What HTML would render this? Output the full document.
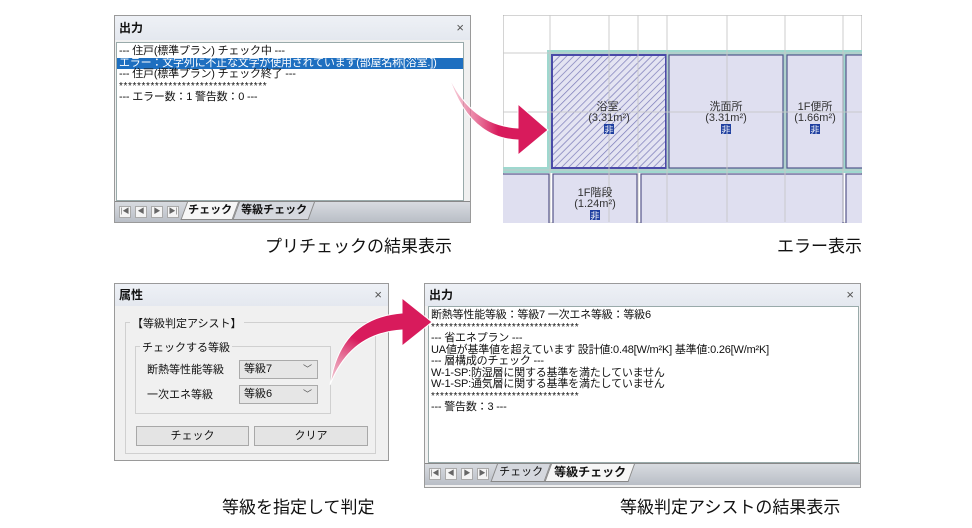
<!DOCTYPE html>
<html><head><meta charset="utf-8">
<style>
*{margin:0;padding:0;box-sizing:border-box}
body{width:972px;height:528px;background:#fff;position:relative;overflow:hidden;font-family:"Liberation Sans","Noto Sans CJK JP",sans-serif;color:#111}
.abs{position:absolute}
.panel{position:absolute;background:#f0f0f0;border:1px solid #9a9a9a}
.title{position:absolute;left:0;right:0;top:0;height:24px;background:linear-gradient(#eef1f6,#e4e8ef);font-weight:bold;font-size:12px;line-height:24px;padding-left:4px}
.x{position:absolute;right:6px;top:0;font-size:13px;color:#555;font-weight:normal}
.txt{position:absolute;background:#fff;border:1px solid #9aa;font-size:11px;line-height:11.5px;white-space:nowrap;overflow:hidden;padding:3px 0 0 2px;letter-spacing:-0.2px}
.st{letter-spacing:0.6px;font-size:10px}
.tabs{position:absolute;left:0;right:0;background:linear-gradient(#d8dbe0,#b9bec6);border-top:1px solid #888}
.nb{position:absolute;top:4px;width:12px;height:12px;background:#f4f4f4;border:1px solid #aaa;font-size:7px;line-height:10px;text-align:center;color:#666}
.tab{position:absolute;top:0;height:18px;font-size:11px;font-weight:bold;line-height:16px;border:1px solid #888;border-top:none;transform:skewX(-20deg);transform-origin:0 0;text-align:center}
.tab span{display:inline-block;transform:skewX(20deg)}
.lbl{position:absolute;font-size:17px;white-space:nowrap}
.sel{position:absolute;background:#e6e6e6;border:1px solid #aaa;font-size:11px;line-height:17px;padding-left:4px}
.sel i{position:absolute;right:5px;top:0;font-style:normal;color:#555;font-size:9px}
.btn{position:absolute;background:#e4e4e4;border:1px solid #a8a8a8;font-size:11px;text-align:center;line-height:19px}
.grp{position:absolute;border:1px solid #d0d0d0}
.gl{position:absolute;background:#f0f0f0;font-size:11px;padding:0 2px;top:-8px}
</style></head><body>

<!-- Panel 1 -->
<div class="panel" style="left:114px;top:15px;width:357px;height:208px">
 <div class="title">出力<span class="x">×</span></div>
 <div class="txt" style="left:1px;top:26px;width:348px;height:159px">
  <div>--- 住戸(標準プラン) チェック中 ---</div>
  <div style="background:#1e6fc0;color:#fff;margin-left:-2px;padding-left:2px">エラー：文字列に不正な文字が使用されています(部屋名称[浴室.])</div>
  <div>--- 住戸(標準プラン) チェック終了 ---</div>
  <div class="st">*********************************</div>
  <div>--- エラー数：1 警告数：0 ---</div>
 </div>
 <div class="tabs" style="top:185px;height:21px">
  <div class="nb" style="left:4px">|◀</div><div class="nb" style="left:20px">◀</div><div class="nb" style="left:36px">▶</div><div class="nb" style="left:52px">▶|</div>
  <div class="tab" style="left:72px;width:52px;background:#f6f6f6;z-index:2"><span>チェック</span></div>
  <div class="tab" style="left:124px;width:76px;background:#d5d8de"><span>等級チェック</span></div>
 </div>
</div>

<!-- Panel 2 floor plan -->
<svg class="abs" style="left:503px;top:15px" width="359" height="208" viewBox="503 15 359 208">
 <defs><pattern id="h" width="5" height="5" patternUnits="userSpaceOnUse" patternTransform="rotate(45)"><rect width="5" height="5" fill="#e4e4f2"/><line x1="0" y1="0" x2="0" y2="5" stroke="#7a7ab8" stroke-width="1.4"/></pattern></defs>
 <rect x="503" y="15" width="359" height="208" fill="#fff" stroke="#aaa"/>
 <rect x="547" y="50" width="315" height="122" fill="#9fd8cf"/>
 <rect x="503" y="167" width="359" height="6" fill="#9fd8cf"/>
 <rect x="552" y="55" width="114" height="113" fill="url(#h)" stroke="#4a4aa8" stroke-width="2"/>
 <rect x="669" y="55" width="114" height="113" fill="#dfdff0" stroke="#55558a" stroke-width="1.2"/>
 <rect x="787" y="55" width="56" height="113" fill="#dfdff0" stroke="#55558a" stroke-width="1.2"/>
 <rect x="846" y="55" width="20" height="113" fill="#dfdff0" stroke="#55558a" stroke-width="1.2"/>
 <rect x="500" y="174" width="49" height="52" fill="#dfdff0" stroke="#55558a" stroke-width="1.2"/>
 <rect x="553" y="174" width="84" height="52" fill="#dfdff0" stroke="#55558a" stroke-width="1.2"/>
 <rect x="641" y="174" width="202" height="52" fill="#dfdff0" stroke="#55558a" stroke-width="1.2"/>
 <rect x="846" y="174" width="20" height="52" fill="#dfdff0" stroke="#55558a" stroke-width="1.2"/>
 <g stroke="#c8c8c8" stroke-width="1" opacity="0.9">
  <line x1="550" y1="15" x2="550" y2="222"/><line x1="609" y1="15" x2="609" y2="222"/><line x1="638" y1="15" x2="638" y2="222"/><line x1="667" y1="15" x2="667" y2="222"/><line x1="727" y1="15" x2="727" y2="222"/><line x1="785" y1="15" x2="785" y2="222"/><line x1="843" y1="15" x2="843" y2="222"/>
  <line x1="503" y1="53" x2="862" y2="53"/><line x1="503" y1="112" x2="862" y2="112"/><line x1="503" y1="170" x2="862" y2="170"/>
 </g>
 <g font-size="11" fill="#333" text-anchor="middle" font-family="Liberation Sans,Noto Sans CJK JP,sans-serif">
  <text x="609" y="110">浴室.</text><text x="609" y="121">(3.31m²)</text>
  <text x="726" y="110">洗面所</text><text x="726" y="121">(3.31m²)</text>
  <text x="815" y="110">1F便所</text><text x="815" y="121">(1.66m²)</text>
  <text x="595" y="196">1F階段</text><text x="595" y="207">(1.24m²)</text>
 </g>
 <g fill="#2040a0"><rect x="604" y="124" width="10" height="10"/><rect x="721" y="124" width="10" height="10"/><rect x="810" y="124" width="10" height="10"/><rect x="590" y="210" width="10" height="10"/></g>
 <g font-size="9" fill="#fff" text-anchor="middle"><text x="609" y="133">非</text><text x="726" y="133">非</text><text x="815" y="133">非</text><text x="595" y="219">非</text></g>
</svg>

<!-- Panel 3 -->
<div class="panel" style="left:114px;top:283px;width:275px;height:178px">
 <div class="title" style="height:22px;line-height:22px">属性<span class="x">×</span></div>
 <div class="grp" style="left:10px;top:38px;width:251px;height:132px"><span class="gl" style="left:4px">【等級判定アシスト】</span></div>
 <div class="grp" style="left:20px;top:62px;width:196px;height:68px"><span class="gl" style="left:4px">チェックする等級</span></div>
 <div class="abs" style="left:32px;top:77px;font-size:11px">断熱等性能等級</div>
 <div class="abs" style="left:32px;top:102px;font-size:11px">一次エネ等級</div>
 <div class="sel" style="left:124px;top:76px;width:79px;height:19px">等級7<i>﹀</i></div>
 <div class="sel" style="left:124px;top:101px;width:79px;height:19px">等級6<i>﹀</i></div>
 <div class="btn" style="left:21px;top:142px;width:113px;height:20px">チェック</div>
 <div class="btn" style="left:139px;top:142px;width:114px;height:20px">クリア</div>
</div>

<!-- Panel 4 -->
<div class="panel" style="left:424px;top:283px;width:437px;height:205px">
 <div class="title" style="height:22px;line-height:22px">出力<span class="x">×</span></div>
 <div class="txt" style="left:3px;top:22px;width:431px;height:157px">
  <div>断熱等性能等級：等級7 一次エネ等級：等級6</div>
  <div class="st">*********************************</div>
  <div>--- 省エネプラン ---</div>
  <div>UA値が基準値を超えています 設計値:0.48[W/m²K] 基準値:0.26[W/m²K]</div>
  <div>--- 層構成のチェック ---</div>
  <div>W-1-SP:防湿層に関する基準を満たしていません</div>
  <div>W-1-SP:通気層に関する基準を満たしていません</div>
  <div class="st">*********************************</div>
  <div>--- 警告数：3 ---</div>
 </div>
 <div class="tabs" style="top:179px;height:22px">
  <div class="nb" style="left:4px">|◀</div><div class="nb" style="left:20px">◀</div><div class="nb" style="left:36px">▶</div><div class="nb" style="left:52px">▶|</div>
  <div class="tab" style="left:72px;width:54px;background:#d5d8de;font-weight:normal"><span>チェック</span></div>
  <div class="tab" style="left:126px;width:84px;background:#f6f6f6;font-size:12px;z-index:2"><span>等級チェック</span></div>
 </div>
</div>

<!-- Arrows -->
<svg class="abs" style="left:0;top:0" width="972" height="528">
 <defs>
  <linearGradient id="g1" x1="0" y1="0" x2="1" y2="0"><stop offset="0" stop-color="#f4b8c8" stop-opacity="0.6"/><stop offset="0.5" stop-color="#d81b5c"/></linearGradient>
  <linearGradient id="g2" x1="0" y1="1" x2="0.6" y2="0"><stop offset="0" stop-color="#f4b8c8" stop-opacity="0.6"/><stop offset="0.5" stop-color="#d81b5c"/></linearGradient>
 </defs>
 <path d="M448 74 Q470 125 518 128 L518 104 L548 130 L518 155 L518 140 Q468 138 448 74 Z" fill="url(#g1)" stroke="#fff" stroke-width="1"/>
 <path d="M330 385 Q340 318 402 313 L402 298 L432 322 L402 346 L402 330 Q350 333 330 385 Z" fill="url(#g2)" stroke="#fff" stroke-width="1"/>
</svg>

<div class="lbl" style="left:265px;top:232px">プリチェックの結果表示</div>
<div class="lbl" style="left:777px;top:232px">エラー表示</div>
<div class="lbl" style="left:222px;top:493px">等級を指定して判定</div>
<div class="lbl" style="left:620px;top:493px">等級判定アシストの結果表示</div>
</body></html>
